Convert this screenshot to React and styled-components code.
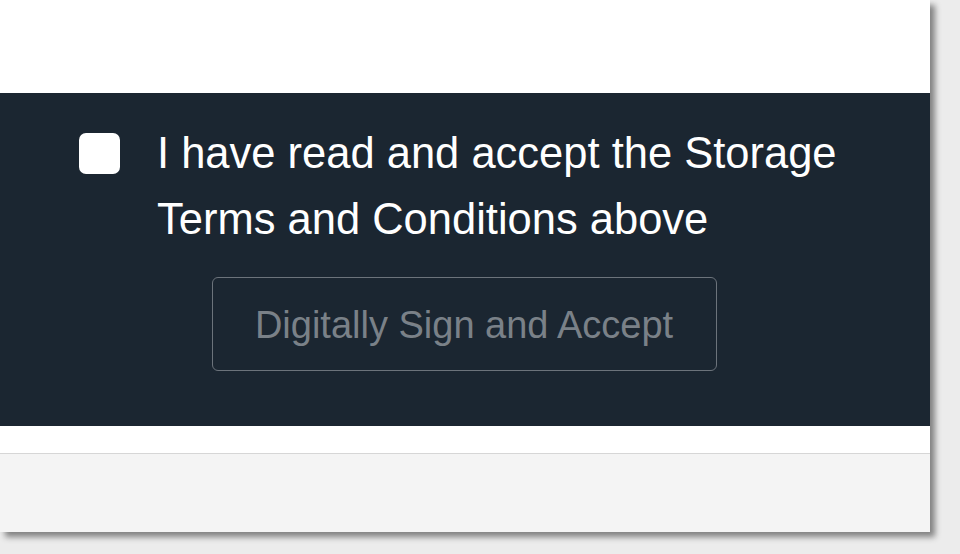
import React from "react";
import styled, { createGlobalStyle } from "styled-components";

const Global = createGlobalStyle`
  html, body { margin: 0; padding: 0; }
  body {
    background: #ececec;
    font-family: "Liberation Sans", Arial, sans-serif;
    overflow: hidden;
  }
`;

const Page = styled.div`
  width: 960px;
  height: 554px;
`;

const Card = styled.div`
  width: 930px;
  height: 532px;
  background: #ffffff;
  display: flex;
  flex-direction: column;
  box-shadow: 5px 5px 6px rgba(0, 0, 0, 0.45);
`;

const TopSpace = styled.div`
  height: 93px;
  background: #ffffff;
  flex: none;
`;

const Panel = styled.section`
  background: #1b2631;
  height: 333px;
  box-sizing: border-box;
  padding: 27px 0 0 79px;
  display: flex;
  flex-direction: column;
  flex: none;
`;

const CheckRow = styled.label`
  display: flex;
  align-items: flex-start;
  gap: 37px;
  cursor: pointer;
`;

const Box = styled.span`
  width: 41px;
  height: 41px;
  margin-top: 13px;
  flex: none;
  background: #ffffff;
  border-radius: 7px;
`;

const LabelText = styled.span`
  color: #ffffff;
  font-size: 43.5px;
  line-height: 66px;
  width: 700px;
`;

const ButtonRow = styled.div`
  display: flex;
  justify-content: center;
  margin: 25px 0 0 -81px;
`;

const SignButton = styled.button`
  width: 505px;
  height: 94px;
  box-sizing: border-box;
  background: transparent;
  border: 1.5px solid #6c737b;
  border-radius: 6px;
  color: #7a8188;
  font-family: "Liberation Sans", Arial, sans-serif;
  font-size: 38px;
  padding: 2px 0 0;
  cursor: not-allowed;
`;

const WhiteStrip = styled.div`
  height: 27px;
  background: #ffffff;
  border-bottom: 1.5px solid #d6d6d6;
  flex: none;
`;

const Footer = styled.div`
  flex: 1;
  background: #f4f4f4;
`;

export default function App() {
  return (
    <Page>
      <Global />
      <Card>
        <TopSpace />
        <Panel>
          <CheckRow>
            <Box />
            <LabelText>
              I have read and accept the Storage Terms and Conditions above
            </LabelText>
          </CheckRow>
          <ButtonRow>
            <SignButton disabled>Digitally Sign and Accept</SignButton>
          </ButtonRow>
        </Panel>
        <WhiteStrip />
        <Footer />
      </Card>
    </Page>
  );
}
